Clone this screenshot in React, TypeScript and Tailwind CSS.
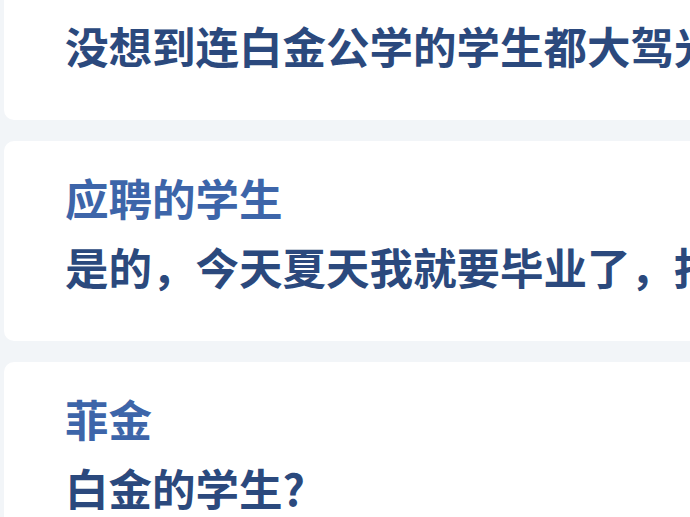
import React from "react";

const font = { fontFamily: '"Noto Sans CJK SC", "Noto Sans", sans-serif' };

function Card({ name, text, first }: { name?: string; text: string; first?: boolean }) {
  return (
    <div
      className={
        "w-[760px] bg-white rounded-[10px] pl-[61px] pb-[40px] whitespace-nowrap " +
        (first ? "-mt-[20px] pt-[31px]" : "pt-[22px]")
      }
    >
      {name && (
        <div className="text-[43.5px] leading-[69px] font-bold text-[#3d65a9]">{name}</div>
      )}
      <div className="text-[43.5px] leading-[69px] font-bold text-[#2b497d]">{text}</div>
    </div>
  );
}

export default function App() {
  return (
    <div className="w-[690px] h-[517px] overflow-hidden bg-[#f2f5f8]" style={font}>
      <div className="flex flex-col gap-[21px] pl-[4px]">
        <Card first text="没想到连白金公学的学生都大驾光临" />
        <Card name="应聘的学生" text="是的，今天夏天我就要毕业了，报名" />
        <Card name="菲金" text="白金的学生?" />
      </div>
    </div>
  );
}
